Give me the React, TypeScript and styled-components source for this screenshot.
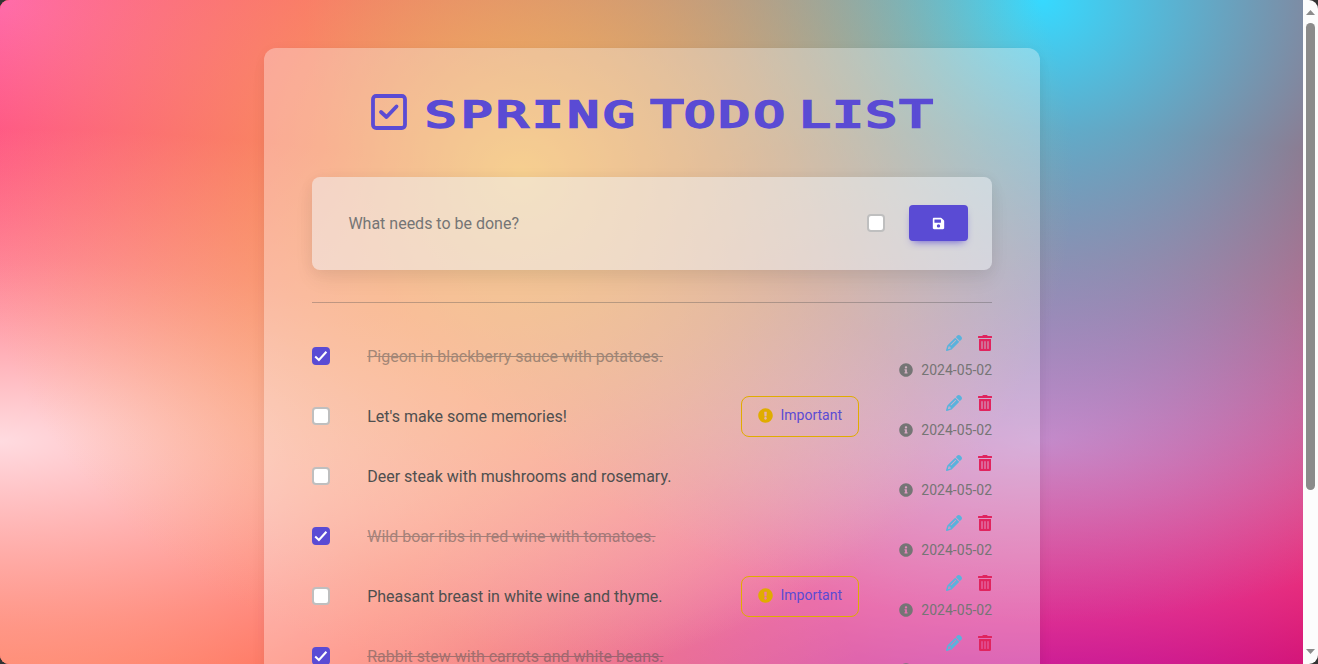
import React from "react";
import styled, { createGlobalStyle } from "styled-components";
import { FaTrashAlt, FaInfoCircle, FaExclamationCircle, FaSave } from "react-icons/fa";
import { FaPencil } from "react-icons/fa6";

const GlobalStyle = createGlobalStyle`
  * { box-sizing: border-box; }
  body { margin: 0; background: #333; font-family: Roboto, "Liberation Sans", sans-serif; font-size: 16px; line-height: 24px; color: #4f4f4f; overflow: hidden; }
`;

const Window = styled.div`
  display: flex;
  width: 1318px;
  height: 664px;
  border-radius: 9px;
  overflow: hidden;
  background: #fcfcfc;
`;

const Viewport = styled.div`
  width: 1303px;
  height: 664px;
  overflow: hidden;
`;

const Page = styled.main`
  height: 882px;
  padding-top: 48px;
  background-color: #ff0000;
  background-image:
    radial-gradient(at 40% 20%, rgb(244, 186, 92) 0, transparent 50%),
    radial-gradient(at 80% 0%, rgb(54, 217, 255) 0, transparent 50%),
    radial-gradient(at 0% 50%, rgb(255, 219, 224) 0, transparent 50%),
    radial-gradient(at 80% 50%, rgb(255, 105, 180) 0, transparent 50%),
    radial-gradient(at 0% 100%, rgb(255, 176, 124) 0, transparent 50%),
    radial-gradient(at 80% 100%, rgb(148, 0, 211) 0, transparent 50%),
    radial-gradient(at 0% 0%, rgb(255, 108, 170) 0, transparent 50%);
`;

const Card = styled.section`
  width: 776px;
  height: 788px;
  margin-left: 264px;
  padding: 40px 48px 48px;
  border-radius: 12px;
  background: rgba(252, 252, 252, 0.33);
  box-shadow: 0 2px 15px -3px rgba(0, 0, 0, 0.07), 0 10px 20px -2px rgba(0, 0, 0, 0.04);
`;

const Heading = styled.header`
  display: flex;
  align-items: center;
  height: 48px;
  margin-bottom: 41px;
  padding-left: 59px;
  color: #5a4bd4;
`;

const Title = styled.h1`
  margin: 6px 0 0 18px;
  font: 400 36px/48px "DejaVu Sans Mono", monospace;
  white-space: nowrap;
  transform: scaleX(1.45);
  transform-origin: left center;
  -webkit-text-stroke: 2.3px #5a4bd4;
`;

const Word = styled.span<{ $spacing: string }>`
  letter-spacing: ${(p) => p.$spacing};
`;

const Gap = styled.span`
  letter-spacing: -14.2px;
`;

const Slab = styled.span`
  font-family: "Liberation Mono", monospace;
  font-size: 40px;
  line-height: 1;
  letter-spacing: -0.3px;
`;

const AddForm = styled.div`
  display: flex;
  align-items: center;
  height: 93px;
  padding: 0 24px 1px 36.4px;
  border-radius: 8px;
  background: rgba(240, 243, 247, 0.5);
  box-shadow: 0 10px 20px 0 rgba(0, 0, 0, 0.06), 0 2px 15px 0 rgba(0, 0, 0, 0.05);
`;

const Placeholder = styled.span`
  flex: 1;
  padding-top: 1px;
  color: #757575;
`;

const SaveButton = styled.button`
  display: grid;
  place-items: center;
  width: 59px;
  height: 36px;
  margin-left: 24px;
  padding: 0;
  border: 0;
  border-radius: 4px;
  color: #fff;
  background: #5a4bd4;
  box-shadow: 0 4px 9px -4px #5a4bd4;
  font-size: 13px;
`;

const Divider = styled.hr`
  height: 1px;
  margin: 32px 0 23px;
  border: 0;
  background: rgba(79, 79, 79, 0.35);
`;

const Box = styled.span<{ $checked?: boolean }>`
  display: grid;
  place-items: center;
  width: 18px;
  height: 18px;
  flex: none;
  border: 2px solid ${(p) => (p.$checked ? "#5a4bd4" : "#bfbfbf")};
  border-radius: 4px;
  background: ${(p) => (p.$checked ? "#5a4bd4" : "#fff")};
`;

const Row = styled.li`
  display: flex;
  height: 60px;
  align-items: center;
`;

const List = styled.ul`
  margin: 0;
  padding: 0;
  list-style: none;
`;

const Label = styled.span<{ $done?: boolean }>`
  flex: 1;
  margin-left: 37.2px;
  padding-top: 2px;
  color: #4f4f4f;
  opacity: ${(p) => (p.$done ? 0.5 : 1)};
  text-decoration: ${(p) => (p.$done ? "line-through" : "none")};
`;

const Badge = styled.span`
  display: flex;
  align-items: center;
  gap: 7.5px;
  width: 118px;
  height: 41px;
  margin-right: 40px;
  padding: 0 0 2px 16px;
  border: 1px solid #e0ac00;
  border-radius: 8px;
  color: #5a4bd4;
  font-size: 14px;
  svg { color: #e0ac00; font-size: 15px; }
`;

const Side = styled.div`
  display: flex;
  flex-direction: column;
  align-items: flex-end;
  width: 93px;
  height: 48px;
`;

const Actions = styled.div`
  display: flex;
  gap: 15px;
  height: 21px;
  margin-right: -0.5px;
  padding-top: 3px;
  font-size: 16px;
`;

const DateLine = styled.div`
  display: flex;
  align-items: center;
  gap: 8px;
  margin-top: 7px;
  height: 20px;
  color: #757575;
  font-size: 14px;
`;

const Scrollbar = styled.div`
  display: flex;
  flex-direction: column;
  align-items: center;
  width: 15px;
  padding: 10px 0 10px;
`;

const Thumb = styled.div`
  width: 9px;
  height: 467px;
  margin: 8px 0 auto;
  border-radius: 5px;
  background: #8b8b8b;
`;

const Check = () => (
  <svg width="14" height="14" viewBox="0 0 14 14" fill="none" stroke="#fff" strokeWidth="2.1">
    <path d="M1.2 7.6 4.9 11 12.4 2.8" />
  </svg>
);

const Arrow = ({ down }: { down?: boolean }) => (
  <svg width="9" height="5" viewBox="0 0 9 5" fill="#8b8b8b">
    <path d={down ? "M0 0h9L4.5 5z" : "M0 5h9L4.5 0z"} />
  </svg>
);

const todos = [
  { text: "Pigeon in blackberry sauce with potatoes.", done: true },
  { text: "Let's make some memories!", important: true },
  { text: "Deer steak with mushrooms and rosemary." },
  { text: "Wild boar ribs in red wine with tomatoes.", done: true },
  { text: "Pheasant breast in white wine and thyme.", important: true },
  { text: "Rabbit stew with carrots and white beans.", done: true },
];

export default function App() {
  return (
    <Window>
      <GlobalStyle />
      <Viewport>
        <Page>
          <Card>
            <Heading>
              <svg width="36" height="36" viewBox="0 0 36 36" fill="none" stroke="currentColor" strokeLinecap="round" strokeLinejoin="round">
                <rect x="2" y="2" width="32" height="32" rx="3.2" strokeWidth="3.8" />
                <path d="M10 18 15.5 23 25.5 12.5" strokeWidth="3.8" />
              </svg>
              <Title>
                <Word $spacing="2.9px">SPRING</Word>
                <Gap> </Gap>
                <Word $spacing="2.3px"><Slab>T</Slab>ODO</Word>
                <Gap> </Gap>
                <Word $spacing="1.2px">LIS<Slab>T</Slab></Word>
              </Title>
            </Heading>
            <AddForm>
              <Placeholder>What needs to be done?</Placeholder>
              <Box />
              <SaveButton aria-label="Save"><FaSave /></SaveButton>
            </AddForm>
            <Divider />
            <List>
              {todos.map((t) => (
                <Row key={t.text}>
                  <Box $checked={t.done}>{t.done && <Check />}</Box>
                  <Label $done={t.done}>{t.text}</Label>
                  {t.important && <Badge><FaExclamationCircle />Important</Badge>}
                  <Side>
                    <Actions>
                      <FaPencil color="#5ab2dc" />
                      <FaTrashAlt color="#e0245e" />
                    </Actions>
                    <DateLine><FaInfoCircle />2024-05-02</DateLine>
                  </Side>
                </Row>
              ))}
            </List>
          </Card>
        </Page>
      </Viewport>
      <Scrollbar>
        <Arrow />
        <Thumb />
        <Arrow down />
      </Scrollbar>
    </Window>
  );
}
